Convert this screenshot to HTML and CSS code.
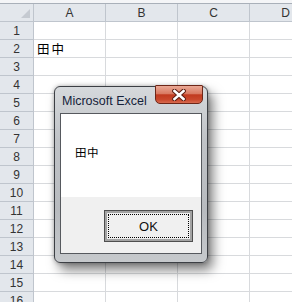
FILE: index.html
```html
<!DOCTYPE html>
<html lang="ja">
<head>
    <meta charset="UTF-8">
    <title>Microsoft Excel</title>
    <link rel="stylesheet" href="styles.css">
</head>
<body>
    <div class="topbar"></div>
    <div class="sheet">
        <div class="hdr corner"></div>
        <div class="hdr col">A</div>
        <div class="hdr col">B</div>
        <div class="hdr col">C</div>
        <div class="hdr col">D</div>
    </div>
    <div class="sheet" id="rows"></div>

    <div class="dialog">
        <div class="titlebar">
            <span class="title">Microsoft Excel</span>
            <div class="close">
                <svg width="14" height="12" viewBox="0 0 14 12">
                    <path d="M2.5 2 L11.5 10 M11.5 2 L2.5 10" stroke="#5b1d12" stroke-width="4.6" stroke-linecap="square"/>
                    <path d="M2.5 2 L11.5 10 M11.5 2 L2.5 10" stroke="#ffffff" stroke-width="2.6" stroke-linecap="square"/>
                </svg>
            </div>
        </div>
        <div class="client">
            <div class="msg">田中</div>
            <div class="btnrow">
                <button class="ok"><span>OK</span></button>
            </div>
        </div>
    </div>

    <script>
        var rows = document.getElementById('rows');
        for (var i = 1; i <= 16; i++) {
            var html = '<div class="hdr num">' + i + '</div>';
            html += '<div class="cell">' + (i === 2 ? '田中' : '') + '</div>';
            html += '<div class="cell"></div><div class="cell"></div><div class="cell"></div>';
            rows.insertAdjacentHTML('beforeend', html);
        }
    </script>
</body>
</html>
```

FILE: styles.css
```css
body {
    margin: 0;
    background: #ffffff;
    font-family: "Liberation Sans", Arial, sans-serif;
    overflow: hidden;
    width: 292px;
    height: 302px;
    position: relative;
}
.topbar {
    height: 3px;
    background: #f4f5f7;
    border-bottom: 1px solid #a9b0b9;
}
.sheet {
    display: grid;
    grid-template-columns: 34px 72px 72px 72px 72px;
    grid-auto-rows: 18px;
}
.sheet > div {
    box-sizing: border-box;
    border-right: 1px solid #d8dadd;
    border-bottom: 1px solid #d8dadd;
}
.hdr {
    background: #e3e7ec;
    color: #333333;
    font-size: 12px;
    display: flex;
    align-items: center;
    justify-content: center;
}
.sheet > .hdr {
    border-color: #bfc5cd;
}
.corner {
    justify-content: flex-end;
    align-items: flex-end;
    padding: 0 3px 3px 0;
}
.corner::after {
    content: "";
    width: 9px;
    height: 9px;
    background: #c5cad1;
    clip-path: polygon(100% 0, 100% 100%, 0 100%);
}
.cell {
    font-family: "Noto Sans CJK JP", sans-serif;
    font-size: 12.5px;
    line-height: 17px;
    padding-left: 3px;
    letter-spacing: 2px;
    color: #000;
}

.dialog {
    position: absolute;
    left: 54px;
    top: 86px;
    width: 154px;
    height: 177px;
    box-sizing: border-box;
    border: 1px solid #3c3f44;
    border-radius: 6px;
    background: linear-gradient(#d6d9dc, #c0c3c7 30%, #b8bbbf 70%, #c6c9cc);
    box-shadow: 5px 7px 12px rgba(0, 0, 0, 0.5), 0 0 4px rgba(0, 0, 0, 0.3);
    display: flex;
    flex-direction: column;
}
.titlebar {
    height: 26px;
    display: flex;
    align-items: center;
    justify-content: space-between;
    padding: 0 4px 0 7px;
}
.title {
    font-size: 12.5px;
    color: #15223a;
    padding-top: 1px;
}
.close {
    align-self: flex-start;
    margin-top: -2px;
    width: 48px;
    height: 19px;
    box-sizing: border-box;
    border: 1px solid #6d2618;
    border-radius: 1px 1px 5px 5px;
    background: linear-gradient(#eaa996, #d97a62 45%, #c13a1f 52%, #c9482c 80%, #d86a4f);
    display: flex;
    align-items: center;
    justify-content: center;
}
.client {
    margin: 0 5px;
    height: 141px;
    box-sizing: border-box;
    border: 1px solid #56595e;
    background: #f0f0f0;
    display: flex;
    flex-direction: column;
}
.msg {
    height: 83px;
    background: #ffffff;
    font-family: "Noto Sans CJK JP", sans-serif;
    font-size: 11.5px;
    padding: 30px 0 0 14px;
    box-sizing: border-box;
    letter-spacing: 0.5px;
    color: #000;
}
.btnrow {
    display: flex;
    justify-content: flex-end;
    padding: 13px 8px 0 0;
}
.ok {
    width: 89px;
    height: 32px;
    box-sizing: border-box;
    padding: 3px;
    border: 1px solid #4e4e4e;
    box-shadow: inset 0 0 0 2px #a3a3a3;
    background: #f0f0f0;
    font-family: "Liberation Sans", Arial, sans-serif;
    font-size: 13px;
    color: #111;
    display: flex;
}
.ok span {
    flex: 1;
    border: 1px dotted #000;
    display: flex;
    align-items: center;
    justify-content: center;
}
```
